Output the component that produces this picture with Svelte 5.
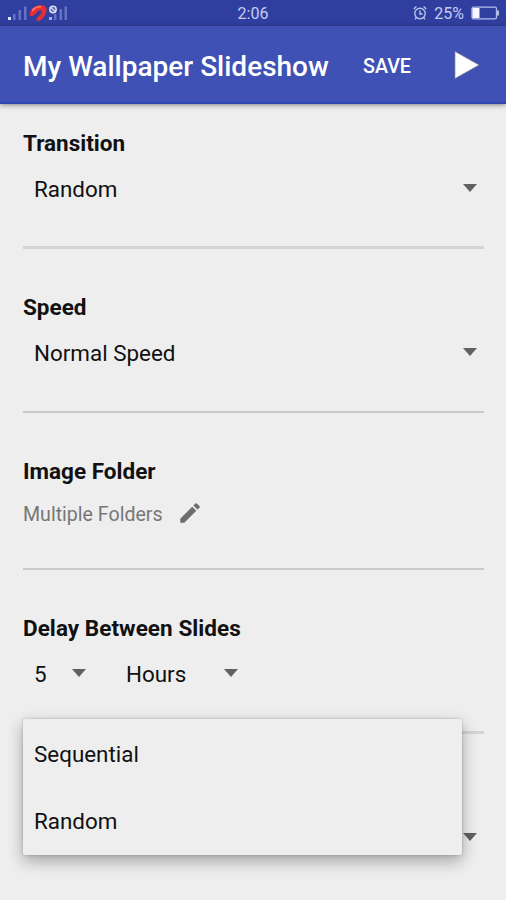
<script>
	let transition = 'Random';
	let speed = 'Normal Speed';
	let folder = 'Multiple Folders';
	let delay = '5';
	let unit = 'Hours';
	let open = true;

	const orders = ['Sequential', 'Random'];

	const choose = () => (open = false);
</script>

<div class="screen">
	<div class="status">
		<svg class="signal" width="70" height="26" viewBox="0 0 70 26">
			<g fill="#6673c4">
				<rect x="13" y="14" width="2.5" height="6" />
				<rect x="18.5" y="10" width="2.5" height="10" />
				<rect x="24" y="6.5" width="2.5" height="13.5" />
				<rect x="54" y="14" width="2.5" height="6" />
				<rect x="59.5" y="9" width="2.5" height="11" />
				<rect x="64.5" y="6.5" width="2.5" height="13.5" />
			</g>
			<rect x="8" y="17" width="3" height="3" fill="#dfe3ff" />
			<rect x="49" y="17" width="3" height="3" fill="#a5aee4" />
			<path
				d="M30 15.500C29 11 34 5.500 40 5C46 4.500 48 9 45.500 14C43.500 18 40.500 21 38 21C35.500 20.500 36 18.500 38.500 16.500C41.500 14 42.500 11 41 10.300C38.500 9.800 36.500 13.500 33.500 15.500C32 16.500 30.500 16.500 30 15.500Z"
				fill="#e52f35"
			/>
			<path d="M32 11C34 8 37.500 6.500 41 6.800" fill="none" stroke="#ff7b66" stroke-width="1.6" />
			<circle cx="53" cy="9.5" r="3.2" fill="#59629f" stroke="#d9def8" stroke-width="1.5" />
			<path d="M51 7.500l4 4" stroke="#d9def8" stroke-width="1.2" />
		</svg>
		<span class="clock">2:06</span>
		<div class="power">
			<svg width="14" height="16" viewBox="0 0 14 16" fill="none" stroke="#bac2ed" stroke-width="1.4">
				<circle cx="7" cy="8.5" r="5.2" />
				<path d="M7 5.500v3.500h2.500M.8 4l2.600-2.400M13.200 4l-2.600-2.400M3.300 12.700l-1.300 1.500M10.700 12.700l1.300 1.500" />
			</svg>
			<span>25%</span>
			<svg width="29" height="14" viewBox="0 0 29 14">
				<rect x="1" y="1.2" width="24.5" height="11.6" rx="1.5" fill="none" stroke="#b4bdec" stroke-width="1.3" />
				<rect x="1.5" y="2" width="7" height="10" fill="#f5f6ff" />
				<rect x="26" y="4.5" width="2" height="5" fill="#b4bdec" />
			</svg>
		</div>
	</div>

	<header>
		<h1>My Wallpaper Slideshow</h1>
		<button class="save">SAVE</button>
		<button class="play" aria-label="Play">
			<svg width="26" height="30" viewBox="0 0 26 30">
				<path d="M1 1.500L25 15L1 28.500Z" fill="#fff" stroke="#85868f" stroke-width=".7" />
			</svg>
		</button>
	</header>

	{#snippet arrow()}
		<svg class="arrow" width="14" height="8" viewBox="0 0 14 8">
			<path d="M0 0h14L7 8z" fill="#616161" />
		</svg>
	{/snippet}

	<main>
		<section class="thick first">
			<h2>Transition</h2>
			<button class="select wide">{transition}{@render arrow()}</button>
		</section>

		<section>
			<h2>Speed</h2>
			<button class="select wide">{speed}{@render arrow()}</button>
		</section>

		<section class="folder">
			<h2>Image Folder</h2>
			<div class="path">
				<span>{folder}</span>
				<svg width="26" height="26" viewBox="0 0 24 24">
					<path
						d="M3 17.250V21h3.750L17.810 9.940l-3.750-3.750L3 17.250zM20.710 7.040a1 1 0 0 0 0-1.410l-2.340-2.340a1 1 0 0 0-1.410 0l-1.830 1.830 3.750 3.750 1.830-1.830z"
						fill="#6d6d6d"
					/>
				</svg>
			</div>
		</section>

		<section class="thick">
			<h2 class="spaced">Delay Between Slides</h2>
			<div class="delay">
				<button class="select count">{delay}{@render arrow()}</button>
				<button class="select unit">{unit}{@render arrow()}</button>
			</div>
		</section>

		<div class="order">
			<button class="select wide" aria-label="Order" on:click={() => (open = !open)}>
				<span></span>{@render arrow()}
			</button>
			{#if open}
				<div class="menu">
					{#each orders as order}
						<button on:click={choose}>{order}</button>
					{/each}
				</div>
			{/if}
		</div>
	</main>
</div>

<style>
	:global(body) {
		margin: 0;
		background: #eee;
	}

	.screen {
		height: 900px;
		display: flex;
		flex-direction: column;
		overflow: hidden;
		background: #eee;
		font-family: Roboto, 'Liberation Sans', sans-serif;
		color: #111;
	}

	button {
		border: 0;
		padding: 0;
		background: none;
		font: inherit;
		color: inherit;
		text-align: left;
	}

	svg {
		display: block;
		flex: none;
	}

	.status {
		height: 26px;
		flex: none;
		display: grid;
		grid-template-columns: 1fr auto 1fr;
		align-items: center;
		background: #303f9f;
		color: #c5ccf2;
		font-size: 16px;
	}

	.clock {
		padding-top: 1px;
	}

	.power {
		display: flex;
		justify-content: flex-end;
		align-items: center;
		gap: 7px;
		padding-right: 6px;
	}

	header {
		height: 78px;
		flex: none;
		box-sizing: border-box;
		display: flex;
		align-items: center;
		padding: 0 26px 0 23px;
		border-bottom: 2px solid #2f45b0;
		background: #3f51b5;
		box-shadow: 0 1px 5px rgba(0, 0, 0, 0.45);
		color: #fff;
	}

	h1 {
		flex: 1;
		margin: 4px 0 0;
		font-size: 28px;
		font-weight: 500;
		white-space: nowrap;
	}

	.save {
		margin: 4px 43px 0 0;
		font-size: 19.7px;
		font-weight: 500;
	}

	.play {
		margin-top: 2px;
	}

	main {
		flex: 1;
		padding: 0 22px 0 23px;
	}

	section {
		height: 164px;
		box-sizing: border-box;
		padding-top: 44px;
		border-bottom: 2px solid #c9c9c9;
	}

	.thick {
		border-bottom: 3px solid #d4d4d4;
	}

	.first {
		height: 145px;
		padding-top: 25px;
	}

	.folder {
		height: 157px;
	}

	h2 {
		margin: 0;
		font-size: 22.5px;
		font-weight: 700;
		line-height: 28px;
	}

	.spaced {
		letter-spacing: 0.05px;
	}

	.select {
		height: 44px;
		margin-top: 10px;
		display: flex;
		align-items: center;
		justify-content: space-between;
		padding: 0 7px 0 11px;
		font-size: 22.4px;
	}

	.wide {
		width: 100%;
	}

	.arrow {
		margin-top: -3px;
	}

	.path {
		height: 40px;
		margin-top: 9px;
		display: flex;
		align-items: center;
		gap: 14px;
		font-size: 19.6px;
		color: #777;
	}

	.path svg {
		margin-top: -2px;
	}

	.delay {
		display: flex;
	}

	.count {
		width: 70px;
	}

	.unit {
		width: 123px;
		margin-left: 22px;
		padding-right: 0;
	}

	.order {
		position: relative;
		padding-top: 72px;
	}

	.menu {
		position: absolute;
		top: -15px;
		left: 0;
		width: 439px;
		height: 136px;
		box-sizing: border-box;
		display: flex;
		flex-direction: column;
		padding: 1px 0;
		border-radius: 2px;
		background: #eee;
		box-shadow:
			0 6px 16px rgba(0, 0, 0, 0.32),
			0 0 3px rgba(0, 0, 0, 0.2);
	}

	.menu button {
		flex: 1;
		padding-left: 11px;
		font-size: 22.4px;
	}
</style>
